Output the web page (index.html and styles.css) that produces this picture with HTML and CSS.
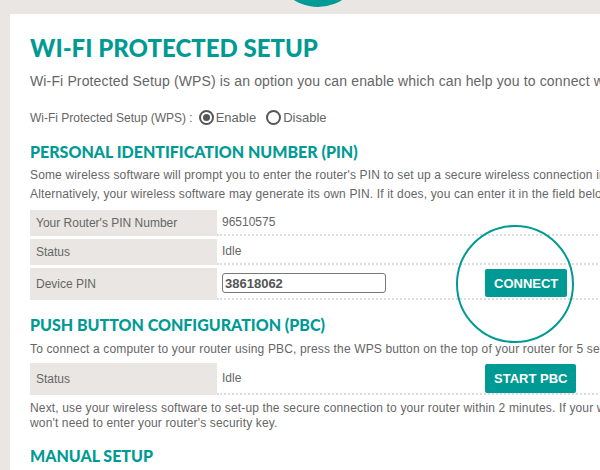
FILE: index.html
```html
<!DOCTYPE html>
<html lang="en">
<head>
  <meta charset="UTF-8">
  <title>Wi-Fi Protected Setup</title>
  <link rel="stylesheet" href="styles.css">
</head>
<body>
  <div class="top-badge"></div>
  <div class="panel">
    <h1>WI-FI PROTECTED SETUP</h1>
    <p class="intro">Wi-Fi Protected Setup (WPS) is an option you can enable which can help you to connect wireless devices to your network.</p>

    <div class="wps-row">
      <span>Wi-Fi Protected Setup (WPS) :</span>
      <label class="radio"><span class="dot checked"></span>Enable</label>
      <label class="radio"><span class="dot"></span>Disable</label>
    </div>

    <h2>PERSONAL IDENTIFICATION NUMBER (PIN)</h2>
    <p class="note pin-note">Some wireless software will prompt you to enter the router's PIN to set up a secure wireless connection instead of the security key.<br>
    Alternatively, your wireless software may generate its own PIN. If it does, you can enter it in the field below and click Connect.</p>

    <div class="table">
      <div class="row">
        <div class="label">Your Router's PIN Number</div>
        <div class="field"><span class="value">96510575</span></div>
      </div>
      <div class="row">
        <div class="label">Status</div>
        <div class="field"><span class="value">Idle</span></div>
      </div>
      <div class="row tall">
        <div class="label">Device PIN</div>
        <div class="field">
          <span class="value"><input type="text" class="pin" value="38618062"></span>
          <span class="action">
            <button class="btn">CONNECT</button>
            <span class="ring"></span>
          </span>
        </div>
      </div>
    </div>

    <h2 class="pbc-title">PUSH BUTTON CONFIGURATION (PBC)</h2>
    <p class="note pbc-note">To connect a computer to your router using PBC, press the WPS button on the top of your router for 5 seconds.</p>

    <div class="table">
      <div class="row tall">
        <div class="label">Status</div>
        <div class="field">
          <span class="value">Idle</span>
          <span class="action"><button class="btn tall-btn">START PBC</button></span>
        </div>
      </div>
    </div>

    <p class="note tight">Next, use your wireless software to set-up the secure connection to your router within 2 minutes. If your wireless software supports WPS, you<br>
    won't need to enter your router's security key.</p>

    <h2 class="manual-title">MANUAL SETUP</h2>
  </div>
</body>
</html>
```

FILE: styles.css
```css
* {
  box-sizing: border-box;
}
html, body {
  margin: 0;
  height: 100%;
  overflow: hidden;
}
body {
  background: #e9e6e3;
  font-family: 'Liberation Sans', Arial, sans-serif;
  color: #666;
  position: relative;
}
.top-badge {
  position: absolute;
  left: 273px;
  top: -83px;
  width: 90px;
  height: 90px;
  border-radius: 50%;
  background: #009a94;
}
.panel {
  margin: 14px 0 0 10px;
  width: 900px;
  min-height: 600px;
  background: #fff;
  padding: 19px 20px 0 20px;
}
h1, h2 {
  font-family: Lato, 'Open Sans', sans-serif;
  font-weight: 900;
  color: #009a94;
  margin: 0;
}
h1 {
  font-size: 24px;
  line-height: 30px;
}
h2 {
  font-size: 16px;
  line-height: 20px;
}
.intro {
  font-size: 14px;
  letter-spacing: 0.14px;
  margin: 10px 0 0;
  white-space: nowrap;
}
.wps-row {
  display: flex;
  align-items: center;
  font-size: 12px;
  margin: 21px 0 17px;
}
.radio {
  display: flex;
  align-items: center;
  font-size: 13px;
  margin-left: 6px;
}
.radio + .radio {
  margin-left: 10px;
}
.dot {
  width: 15px;
  height: 15px;
  border: 2px solid #555;
  border-radius: 50%;
  margin-right: 2px;
  display: flex;
  align-items: center;
  justify-content: center;
}
.dot.checked::after {
  content: "";
  width: 7px;
  height: 7px;
  border-radius: 50%;
  background: #555;
}
.note {
  font-size: 12px;
  letter-spacing: 0.15px;
  line-height: 19px;
  white-space: nowrap;
}
.pin-note {
  margin: 4px 0 6px;
}
.pbc-note {
  margin: 5px 0 4px;
}
.note.tight {
  line-height: 15px;
  margin: 6px 0 0;
}
.table {
  display: flex;
  flex-direction: column;
  gap: 3px;
  font-size: 12px;
}
.row {
  display: flex;
  height: 26px;
}
.row.tall {
  height: 32px;
}
.label {
  width: 187px;
  background: #e9e6e3;
  padding-left: 6px;
  display: flex;
  align-items: center;
}
.field {
  flex: 1;
  display: flex;
  align-items: center;
  padding-left: 5px;
  border-bottom: 2px dotted #ddd;
}
.value {
  width: 263px;
}
.pin {
  width: 164px;
  height: 20px;
  border: 1px solid #777;
  border-radius: 3px;
  font-family: 'Liberation Sans', Arial, sans-serif;
  font-weight: bold;
  font-size: 13px;
  color: #555;
  padding: 0 2px;
}
.action {
  position: relative;
}
.btn {
  background: #009a94;
  color: #fff;
  border: none;
  border-radius: 2px;
  font-family: 'Liberation Sans', Arial, sans-serif;
  font-weight: bold;
  font-size: 13px;
  height: 28px;
  padding: 0 9px;
}
.tall-btn {
  height: 29px;
}
.ring {
  position: absolute;
  left: -29px;
  top: -44px;
  width: 118px;
  height: 118px;
  border: 2px solid #009a94;
  border-radius: 50%;
}
.pbc-title {
  margin-top: 15px;
}
.manual-title {
  margin-top: 15px;
}
```
